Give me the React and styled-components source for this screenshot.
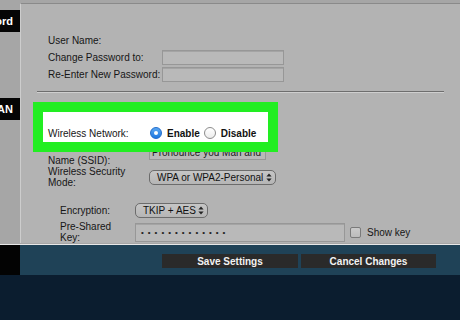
import React from "react";
import styled, { createGlobalStyle } from "styled-components";

const GlobalStyle = createGlobalStyle`
  html, body {
    margin: 0;
    padding: 0;
  }
  body {
    width: 460px;
    height: 320px;
    overflow: hidden;
    background: #0b1d2f;
    font-family: "Liberation Sans", Arial, sans-serif;
  }
`;

const Page = styled.div`
  width: 460px;
  height: 320px;
  display: flex;
  flex-direction: column;
  background: #0b1d2f;
`;

const Main = styled.div`
  display: flex;
  height: 244px;
  background: #a6a6a6;
`;

const Sidebar = styled.div`
  flex: 0 0 20px;
  width: 20px;
  min-width: 0;
  display: flex;
  flex-direction: column;
  padding-top: 10px;
  box-sizing: border-box;
  overflow: hidden;
`;

const Tab = styled.div`
  height: 22px;
  margin-top: ${(p) => p.$gap || 0}px;
  padding-right: 7px;
  background: #050505;
  color: #fff;
  font-size: 11px;
  font-weight: 700;
  display: flex;
  align-items: center;
  justify-content: flex-end;
  white-space: nowrap;
  overflow: hidden;
`;

const Panel = styled.div`
  flex: 1;
  min-width: 0;
  margin-top: 3px;
  height: 240px;
  border-top: 1px solid #8a8a8a;
  border-left: 1px solid #cdcdcd;
  background: #b3b3b3;
  display: flex;
  flex-direction: column;
  padding-top: 28px;
  box-sizing: border-box;
  overflow: hidden;
`;

const Group = styled.div`
  display: flex;
  flex-direction: column;
  padding-left: ${(p) => p.$indent}px;
  margin-top: ${(p) => p.$top || 0}px;
`;

const Row = styled.div`
  display: flex;
  align-items: ${(p) => (p.$alignTop ? "flex-start" : "center")};
  min-height: ${(p) => p.$h || 17}px;
  margin-top: ${(p) => p.$top || 0}px;
`;

const Label = styled.div`
  flex: 0 0 ${(p) => p.$w}px;
  padding-top: ${(p) => p.$pad || 0}px;
  font-size: 10px;
  line-height: 11px;
  color: #161616;
  white-space: nowrap;
`;

const Field = styled.div`
  width: ${(p) => p.$w}px;
  height: ${(p) => p.$h || 15}px;
  box-sizing: border-box;
  border: 1px solid #979797;
  background: #b9b9b9;
  box-shadow: inset 0 1px 0 #a4a4a4;
  font-size: 10px;
  color: #1a1a1a;
  padding-left: 2px;
  display: flex;
  align-items: center;
  white-space: nowrap;
  overflow: hidden;
`;

const Dots = styled.span`
  font-size: 8px;
  letter-spacing: 4px;
  color: #222;
  padding-left: 3px;
`;

const Select = styled.div`
  width: ${(p) => p.$w}px;
  height: 15px;
  box-sizing: border-box;
  border: 1px solid #6c6c6c;
  border-radius: 5px;
  background: linear-gradient(#c6c6c6, #b5b5b5);
  padding: 0 3px 0 7px;
  display: flex;
  align-items: center;
  justify-content: space-between;
  font-size: 10px;
  color: #111;
  white-space: nowrap;
`;

const Divider = styled.div`
  margin: 8px 16px 0 16px;
  border-top: 1px solid #6e6e6e;
  border-bottom: 1px solid #cfcfcf;
`;

const Highlight = styled.div`
  position: relative;
  z-index: 1;
  align-self: flex-start;
  margin: 9px 0 0 12px;
  width: 245px;
  height: 50px;
  box-sizing: border-box;
  border: 10px solid #22ee22;
  background: #ffffff;
  padding: 14px 0 0 5px;
`;

const RadioGroup = styled.div`
  display: flex;
  align-items: center;
  margin-left: 1px;
`;

const RadioOption = styled.label`
  display: flex;
  align-items: center;
  gap: 5px;
  margin-right: 4px;
  font-size: 10px;
  font-weight: 700;
  color: #111;
`;

const Radio = styled.span`
  width: 12px;
  height: 12px;
  box-sizing: border-box;
  border-radius: 50%;
  display: flex;
  align-items: center;
  justify-content: center;
  border: 1px solid ${(p) => (p.$on ? "#1f6ccc" : "#8c8c8c")};
  background: ${(p) =>
    p.$on ? "linear-gradient(#5aa6f2, #1f78e0)" : "linear-gradient(#ffffff, #ececec)"};
  &::after {
    content: "";
    width: 4px;
    height: 4px;
    border-radius: 50%;
    background: #fff;
    display: ${(p) => (p.$on ? "block" : "none")};
  }
`;

const Checkbox = styled.span`
  width: 9px;
  height: 9px;
  margin-left: 5px;
  border: 1px solid #7a7a7a;
  border-radius: 2px;
  background: linear-gradient(#cacaca, #bcbcbc);
`;

const CheckLabel = styled.span`
  margin-left: 6px;
  font-size: 10px;
  color: #161616;
`;

const Rule = styled.div`
  height: 1px;
  background: #e8e8e8;
`;

const Bar = styled.div`
  display: flex;
  height: 30px;
`;

const BarCorner = styled.div`
  flex: 0 0 20px;
  background: #030303;
`;

const BarBody = styled.div`
  flex: 1;
  background: #1f4257;
  display: flex;
  gap: 3px;
  padding: 9px 0 0 142px;
  box-sizing: border-box;
`;

const Button = styled.div`
  width: ${(p) => p.$w}px;
  height: 14px;
  background: #2a2a2a;
  color: #f2f2f2;
  font-size: 10px;
  font-weight: 700;
  display: flex;
  align-items: center;
  justify-content: center;
`;

function Arrows() {
  return (
    <svg width="6" height="9" viewBox="0 0 6 9">
      <path d="M3 0.5 L5.6 3.6 H0.4 Z" fill="#222" />
      <path d="M3 8.5 L5.6 5.4 H0.4 Z" fill="#222" />
    </svg>
  );
}

export default function App() {
  return (
    <>
      <GlobalStyle />
      <Page>
        <Main>
          <Sidebar>
            <Tab>Password</Tab>
            <Tab $gap={66}>WLAN</Tab>
          </Sidebar>
          <Panel>
            <Group $indent={27}>
              <Row>
                <Label $w={114}>User Name:</Label>
              </Row>
              <Row>
                <Label $w={114}>Change Password to:</Label>
                <Field $w={122} />
              </Row>
              <Row>
                <Label $w={114}>Re-Enter New Password:</Label>
                <Field $w={122} />
              </Row>
            </Group>
            <Divider />
            <Highlight>
              <Row $h={14}>
                <Label $w={101}>Wireless Network:</Label>
                <RadioGroup>
                  <RadioOption>
                    <Radio $on />
                    Enable
                  </RadioOption>
                  <RadioOption>
                    <Radio />
                    Disable
                  </RadioOption>
                </RadioGroup>
              </Row>
            </Highlight>
            <Group $indent={27} $top={-8}>
              <Row $alignTop $h={22}>
                <Label $w={101} $pad={11}>
                  Name (SSID):
                </Label>
                <Field $w={117} $h={16}>
                  Pronounce you Man and
                </Field>
              </Row>
              <Row $h={22}>
                <Label $w={101}>
                  Wireless Security
                  <br />
                  Mode:
                </Label>
                <Select $w={127}>
                  WPA or WPA2-Personal
                  <Arrows />
                </Select>
              </Row>
            </Group>
            <Group $indent={39} $top={13}>
              <Row $h={19}>
                <Label $w={75}>Encryption:</Label>
                <Select $w={73}>
                  TKIP + AES
                  <Arrows />
                </Select>
              </Row>
              <Row $h={22} $top={1}>
                <Label $w={75}>
                  Pre-Shared
                  <br />
                  Key:
                </Label>
                <Field $w={210} $h={19}>
                  <Dots>•••••••••••••</Dots>
                </Field>
                <Checkbox />
                <CheckLabel>Show key</CheckLabel>
              </Row>
            </Group>
          </Panel>
        </Main>
        <Rule />
        <Bar>
          <BarCorner />
          <BarBody>
            <Button $w={136}>Save Settings</Button>
            <Button $w={135}>Cancel Changes</Button>
          </BarBody>
        </Bar>
      </Page>
    </>
  );
}
